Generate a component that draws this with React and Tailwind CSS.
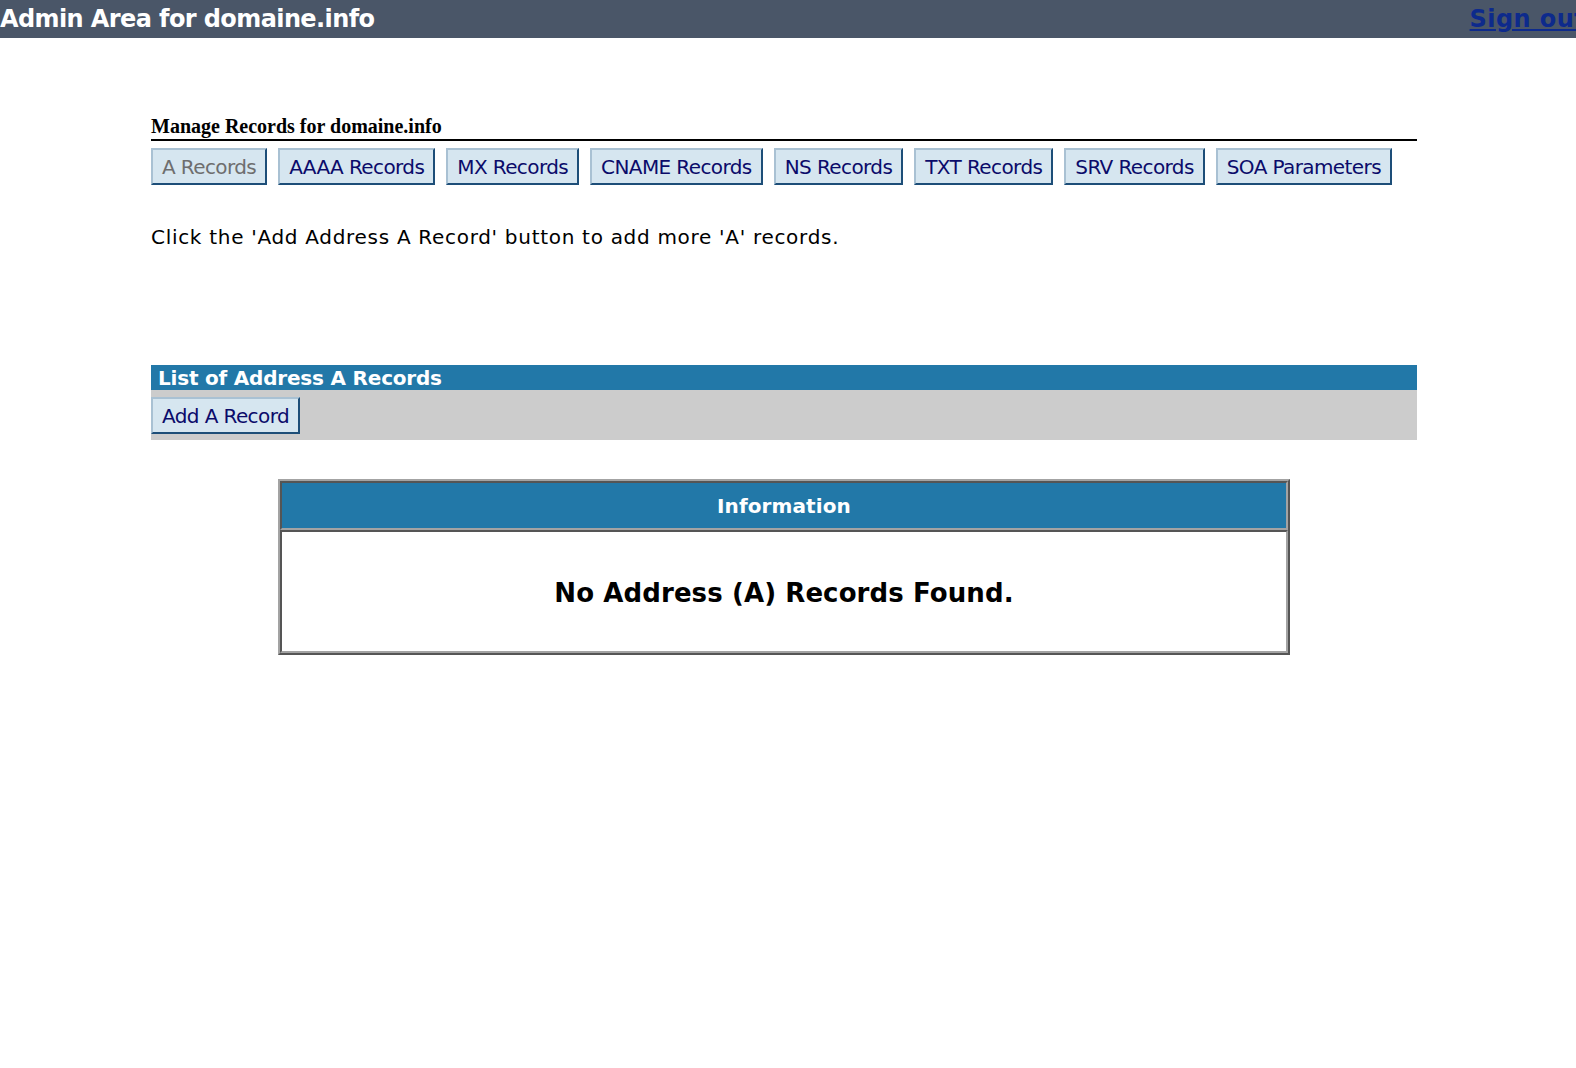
import React from "react";

const tabs = [
  { name: "A Records", active: true },
  { name: "AAAA Records" },
  { name: "MX Records" },
  { name: "CNAME Records" },
  { name: "NS Records" },
  { name: "TXT Records" },
  { name: "SRV Records" },
  { name: "SOA Parameters" },
];

const sans = "font-['Verdana','DejaVu_Sans',sans-serif]";

const TabButton = ({ name, active }) => (
  <button
    className={`h-[37px] px-[9px] bg-[#d6e6f0] border-2 border-t-[#a9c1d3] border-l-[#a9c1d3] border-b-[#1d4e78] border-r-[#1d4e78] text-[20px] tracking-[-0.6px] leading-none ${
      active ? "text-[#6e6e6e]" : "text-[#0b0b6a]"
    }`}
  >
    {name}
  </button>
);

export default function App() {
  return (
    <div className={`min-h-[1068px] bg-white ${sans}`}>
      {/* top bar */}
      <div className="h-[38px] bg-[#4a5668] flex items-center justify-between overflow-hidden">
        <div className="text-white font-bold text-[24px] tracking-[-0.6px] leading-none">
          Admin Area for domaine.info
        </div>
        <a
          href="#"
          className="text-[#0d2a8c] font-bold text-[24px] tracking-[0.4px] underline leading-none mr-[-10px] shrink-0"
        >
          Sign out
        </a>
      </div>

      <div className="ml-[151px] w-[1266px]">
        {/* section title */}
        <div className="mt-[76px] border-b-2 border-black pb-[1px] font-['Liberation_Serif',serif] font-bold text-[20px] leading-[24px] text-black">
          Manage Records for domaine.info
        </div>

        {/* tabs */}
        <div className="flex gap-[11px] mt-[7px]">
          {tabs.map((t) => (
            <TabButton key={t.name} name={t.name} active={t.active} />
          ))}
        </div>

        <p className="mt-[40px] text-[20px] tracking-[0.7px] leading-[24px] text-black">
          Click the 'Add Address A Record' button to add more 'A' records.
        </p>

        {/* list */}
        <div className="mt-[116px]">
          <div className="h-[25px] bg-[#2278a8] flex items-center px-[7px] text-white font-bold text-[20px] tracking-[-0.2px] leading-none">
            List of Address A Records
          </div>
          <div className="h-[50px] bg-[#cccccc] pt-[7px]">
            <TabButton name="Add A Record" />
          </div>
        </div>

        {/* info box */}
        <div className="mt-[39px] mx-auto w-[1012px] border-2 border-t-[#a3a3a3] border-l-[#a3a3a3] border-b-[#555555] border-r-[#555555]">
          <div className="h-[49px] bg-[#2278a8] border-2 border-t-[#555555] border-l-[#555555] border-b-[#a3a3a3] border-r-[#a3a3a3] flex items-center justify-center text-white font-bold text-[20px] tracking-[0.1px]">
            Information
          </div>
          <div className="h-[123px] bg-white border-2 border-t-[#555555] border-l-[#555555] border-b-[#a3a3a3] border-r-[#a3a3a3] flex items-center justify-center text-black font-bold text-[26px] tracking-[0.1px] pt-[4px]">
            No Address (A) Records Found.
          </div>
        </div>
      </div>
    </div>
  );
}
